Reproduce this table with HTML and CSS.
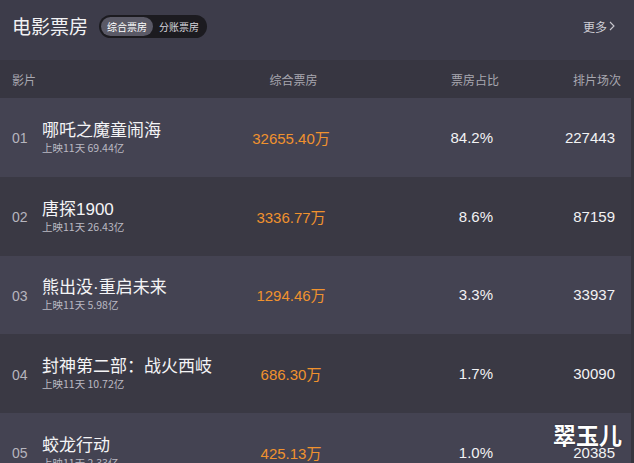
FILE: index.html
```html
<!DOCTYPE html>
<html lang="zh-CN">
<head>
    <meta charset="UTF-8">
    <meta name="viewport" content="width=device-width, initial-scale=1.0">
    <title>电影票房</title>
    <link rel="stylesheet" href="styles.css">
</head>
<body>
    <div class="top">
        <h1>电影票房</h1>
        <div class="switch">
            <span class="seg active">综合票房</span>
            <span class="seg">分账票房</span>
        </div>
        <a class="more">更多<svg width="6" height="10" viewBox="0 0 6 10"><path d="M1 1 L5 5 L1 9" fill="none" stroke="#c9c8cf" stroke-width="1.1"/></svg></a>
    </div>

    <div class="labels">
        <span class="l-name">影片</span>
        <span class="l-box">综合票房</span>
        <span class="l-right">票房占比</span>
        <span class="l-right">排片场次</span>
    </div>

    <div class="list">
        <div class="row">
            <div class="film">
                <span class="rank">01</span>
                <div class="info">
                    <p class="title">哪吒之魔童闹海</p>
                    <p class="sub">上映11天 69.44亿</p>
                </div>
            </div>
            <span class="box">32655.40万</span>
            <span class="num">84.2%</span>
            <span class="num">227443</span>
        </div>
        <div class="row">
            <div class="film">
                <span class="rank">02</span>
                <div class="info">
                    <p class="title">唐探1900</p>
                    <p class="sub">上映11天 26.43亿</p>
                </div>
            </div>
            <span class="box">3336.77万</span>
            <span class="num">8.6%</span>
            <span class="num">87159</span>
        </div>
        <div class="row">
            <div class="film">
                <span class="rank">03</span>
                <div class="info">
                    <p class="title">熊出没·重启未来</p>
                    <p class="sub">上映11天 5.98亿</p>
                </div>
            </div>
            <span class="box">1294.46万</span>
            <span class="num">3.3%</span>
            <span class="num">33937</span>
        </div>
        <div class="row">
            <div class="film">
                <span class="rank">04</span>
                <div class="info">
                    <p class="title">封神第二部：战火西岐</p>
                    <p class="sub">上映11天 10.72亿</p>
                </div>
            </div>
            <span class="box">686.30万</span>
            <span class="num">1.7%</span>
            <span class="num">30090</span>
        </div>
        <div class="row">
            <div class="film">
                <span class="rank">05</span>
                <div class="info">
                    <p class="title">蛟龙行动</p>
                    <p class="sub">上映11天 2.33亿</p>
                </div>
            </div>
            <span class="box">425.13万</span>
            <span class="num">1.0%</span>
            <span class="num">20385</span>
        </div>
    </div>

    <div class="mark">翠玉儿</div>
</body>
</html>
```

FILE: styles.css
```css
body {
    margin: 0;
    width: 634px;
    height: 463px;
    overflow: hidden;
    position: relative;
    background: #3d3c4a;
    font-family: "Liberation Sans", "Noto Sans CJK SC", sans-serif;
    color: #f2f2f4;
}
p {
    margin: 0;
}
.top {
    height: 60px;
    display: flex;
    align-items: center;
    padding: 0 19px 0 12px;
    box-sizing: border-box;
}
.top h1 {
    margin: -8px 11px 0 0;
    font-size: 19px;
    font-weight: normal;
    font-family: "Noto Sans CJK SC", sans-serif;
    line-height: 24px;
}
.switch {
    display: flex;
    padding: 2px;
    background: #1c1b20;
    border-radius: 12px;
    margin-top: -8px;
}
.seg {
    height: 19px;
    line-height: 19px;
    padding: 0 6px;
    font-size: 10px;
    font-family: "Noto Sans CJK SC", sans-serif;
    color: #d6d5dc;
    border-radius: 10px;
}
.seg.active {
    background: #5a5966;
    color: #fff;
}
.more {
    margin-left: auto;
    font-size: 12px;
    font-family: "Noto Sans CJK SC", sans-serif;
    color: #cfced5;
    display: flex;
    align-items: center;
    gap: 2px;
    margin-top: -8px;
}
.labels {
    height: 38px;
    background: #373641;
    display: grid;
    grid-template-columns: 1fr 127px 142px 122px;
    align-items: center;
    padding: 0 13px 0 12px;
    font-size: 12px;
    font-family: "Noto Sans CJK SC", sans-serif;
    color: #a8a7b0;
}
.l-box {
    text-align: center;
}
.l-right {
    text-align: right;
}
.row {
    height: 78.75px;
    display: grid;
    grid-template-columns: 1fr 120px 142px 122px;
    align-items: center;
    padding: 0 16px 0 12px;
    border-right: 3px solid #36353e;
    box-sizing: border-box;
    background: #444352;
}
.row:nth-child(even) {
    background: #3a3944;
}
.film {
    display: flex;
    align-items: center;
}
.rank {
    width: 30px;
    font-size: 14px;
    color: #b6b5be;
    margin-top: 2px;
}
.info .title {
    font-size: 17px;
    line-height: 21px;
    color: #f4f4f6;
}
.info .sub {
    font-size: 10.5px;
    line-height: 14px;
    font-family: "Noto Sans CJK SC", sans-serif;
    color: #bab9c2;
}
.box {
    text-align: center;
    font-size: 15px;
    color: #f0922e;
}
.num {
    text-align: right;
    font-size: 15px;
    color: #f2f2f4;
}
.mark {
    position: absolute;
    right: 12px;
    top: 420px;
    font-size: 23px;
    line-height: 28px;
    font-weight: bold;
    font-family: "Noto Sans CJK SC", sans-serif;
    color: #fff;
    text-shadow: 0 0 2px rgba(0, 0, 0, 0.4);
}
```
